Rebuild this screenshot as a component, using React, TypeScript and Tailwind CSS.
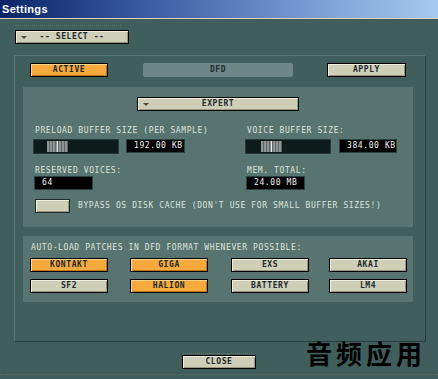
import React from 'react'

const mono = 'font-["DejaVu_Sans_Mono","Liberation_Mono",monospace] text-[8px] leading-[8px] tracking-[0.6px] uppercase'

function Btn({ label, on, w, className = '' }: { label: string; on?: boolean; w: number; className?: string }) {
  return (
    <div
      className={`${className} flex h-[14px] shrink-0 items-center justify-center border border-black ${mono} font-bold text-[#1d2a30] ${
        on
          ? 'bg-[#f6a93d] shadow-[inset_1px_1px_0_#ffd489,inset_-1px_-1px_0_#b8761e]'
          : 'bg-[#cfcfb8] shadow-[inset_1px_1px_0_#eeeede,inset_-1px_-1px_0_#97977f]'
      }`}
      style={{ width: w }}>
      {label}
    </div>
  )
}

function Dropdown({ label, w, className = '' }: { label: string; w: number; className?: string }) {
  return (
    <div
      className={`${className} relative flex h-[14px] shrink-0 items-center justify-center border border-black bg-[#cfcfb8] shadow-[inset_1px_1px_0_#eeeede,inset_-1px_-1px_0_#97977f] ${mono} font-bold text-[#1d2a30]`}
      style={{ width: w }}>
      <span className="absolute left-[5px] top-[5px] h-0 w-0 border-x-[3px] border-t-[3px] border-x-transparent border-t-[#4a4a40]" />
      {label}
    </div>
  )
}

function Slider({ thumb }: { thumb: number }) {
  return (
    <div className="relative h-[15px] w-[86px] shrink-0 border border-[#26393a] bg-[#0d1b1b]">
      <div
        className="absolute top-[1px] h-[11px] w-[21px] bg-[repeating-linear-gradient(90deg,#8f9494_0px,#8f9494_2px,#5f6464_2px,#5f6464_3px)]"
        style={{ left: thumb }}>
        <div className="absolute left-[10px] top-0 h-full w-[1px] bg-[#e8e8e8]" />
      </div>
    </div>
  )
}

function Value({ v, w, className = '' }: { v: string; w: number; className?: string }) {
  return (
    <div
      className={`${className} flex h-[14px] shrink-0 items-center border border-[#2c4242] bg-black pl-[7px] ${mono} text-[#f0f0f0]`}
      style={{ width: w }}>
      {v}
    </div>
  )
}

const panel =
  'bg-[#587470] bg-[radial-gradient(#42544f_0.8px,transparent_0.8px)] bg-[length:8px_6px]'

const patches = [
  [
    { l: 'KONTAKT', on: true, m: 'ml-[7px]' },
    { l: 'GIGA', on: true, m: 'ml-[22px]' },
    { l: 'EXS', on: false, m: 'ml-[23px]' },
    { l: 'AKAI', on: false, m: 'ml-[20px]' },
  ],
  [
    { l: 'SF2', on: false, m: 'ml-[7px]' },
    { l: 'HALION', on: true, m: 'ml-[22px]' },
    { l: 'BATTERY', on: false, m: 'ml-[23px]' },
    { l: 'LM4', on: false, m: 'ml-[20px]' },
  ],
]

export default function App() {
  return (
    <div className="relative flex h-[379px] w-[438px] flex-col overflow-hidden bg-[#3f5e5c]">
      <div className="flex h-[18px] shrink-0 items-center bg-[linear-gradient(90deg,#0b2468,#3c5ea4_35%,#6f93cc_65%,#a6caf0)] pl-[2px] font-['Liberation_Sans',Arial,sans-serif] text-[11px] font-bold tracking-[0.3px] text-white">
        Settings
      </div>
      <div className="h-[1px] shrink-0 bg-[#d9d3b4]" />

      <div className="ml-[15px] mt-[6px] w-[106px] border-t border-dotted border-[#6b7763]" />
      <Dropdown label="-- SELECT --" w={114} className="ml-[15px] mt-[4px]" />

      <div className="ml-[14px] mt-[11px] flex h-[287px] w-[412px] flex-col border border-b-[#263d3c] border-l-[#5a7674] border-r-[#263d3c] border-t-[#5a7674]">
        <div className="mt-[7px] flex items-center">
          <Btn label="ACTIVE" on w={78} className="ml-[15px]" />
          <div className={`ml-[35px] flex h-[14px] w-[150px] items-center justify-center rounded-[2px] bg-[#6d8787] ${mono} font-bold text-[#1d2a30]`}>
            DFD
          </div>
          <Btn label="APPLY" w={79} className="ml-[34px]" />
        </div>

        <div className={`ml-[8px] mt-[10px] flex h-[140px] w-[390px] flex-col ${panel}`}>
          <Dropdown label="EXPERT" w={162} className="ml-[114px] mt-[10px]" />
          <div className="mt-[16px] flex">
            <div className="ml-[10px] flex w-[212px] flex-col">
              <div className={`ml-[2px] ${mono} text-[#dbe3dc]`}>PRELOAD BUFFER SIZE (PER SAMPLE)</div>
              <div className="mt-[4px] flex">
                <Slider thumb={13} />
                <Value v="192.00 KB" w={59} className="ml-[7px]" />
              </div>
              <div className={`ml-[2px] mt-[13px] ${mono} text-[#dbe3dc]`}>RESERVED VOICES:</div>
              <Value v="64" w={59} className="ml-[1px] mt-[1px]" />
            </div>
            <div className="flex flex-col">
              <div className={`ml-[2px] ${mono} text-[#dbe3dc]`}>VOICE BUFFER SIZE:</div>
              <div className="mt-[4px] flex">
                <Slider thumb={15} />
                <Value v="384.00 KB" w={58} className="ml-[8px]" />
              </div>
              <div className={`ml-[2px] mt-[13px] ${mono} text-[#dbe3dc]`}>MEM. TOTAL:</div>
              <Value v="24.00 MB" w={59} className="ml-[1px] mt-[1px]" />
            </div>
          </div>
          <div className="ml-[12px] mt-[9px] flex items-center">
            <div className="h-[14px] w-[35px] border border-[#1c2c2c] bg-[#cfcfb8] shadow-[inset_1px_1px_0_#eeeede,inset_-1px_-1px_0_#97977f]" />
            <div className={`ml-[8px] ${mono} text-[#dbe3dc]`}>
              BYPASS OS DISK CACHE (DON'T USE FOR SMALL BUFFER SIZES!)
            </div>
          </div>
        </div>

        <div className={`ml-[8px] mt-[9px] flex h-[66px] w-[390px] flex-col ${panel}`}>
          <div className={`ml-[8px] mt-[8px] ${mono} text-[#dbe3dc]`}>
            AUTO-LOAD PATCHES IN DFD FORMAT WHENEVER POSSIBLE:
          </div>
          {patches.map((row, i) => (
            <div key={i} className={`flex ${i === 0 ? 'mt-[6px]' : 'mt-[7px]'}`}>
              {row.map((b) => (
                <Btn key={b.l} label={b.l} on={b.on} w={78} className={b.m} />
              ))}
            </div>
          ))}
        </div>
      </div>

      <div className="ml-[182px] mt-[11px] w-[70px] border-t border-dotted border-[#6b7763]" />
      <Btn label="CLOSE" w={74} className="ml-[182px] mt-[1px]" />
      <div className="mt-[5px] w-full border-t border-dotted border-[#5e6c5a]" />

      <div className="absolute left-[306px] top-[338px] font-['Noto_Sans_CJK_SC',sans-serif] text-[26px] font-bold leading-[30px] tracking-[4px] text-black">
        音频应用
      </div>
    </div>
  )
}
